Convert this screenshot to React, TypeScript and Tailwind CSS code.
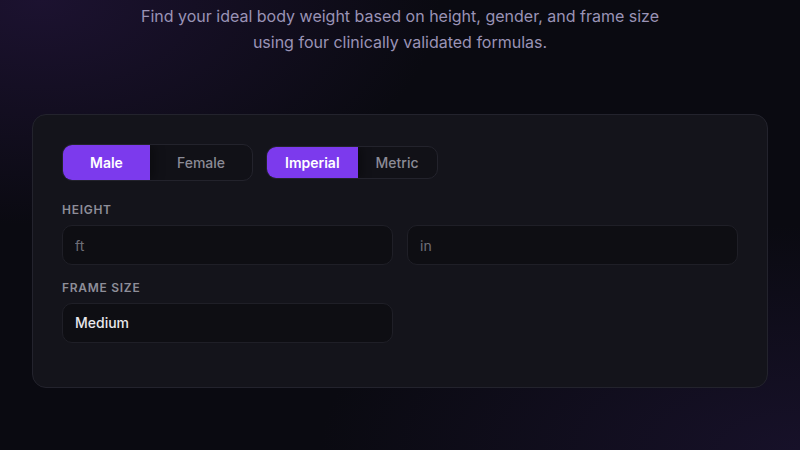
import { useState } from "react";

const font = { fontFamily: "Inter, 'Noto Sans', sans-serif" };

function Segmented({
  options,
  value,
  onChange,
  size,
}: {
  options: string[];
  value: string;
  onChange: (v: string) => void;
  size: "lg" | "sm";
}) {
  const btn = size === "lg" ? "h-[35px] px-[27px]" : "h-[31px] px-[18px]";
  return (
    <div className="flex rounded-[10px] border border-[#23232c] bg-[#111117] overflow-hidden">
      {options.map((opt) => (
        <button
          key={opt}
          onClick={() => onChange(opt)}
          className={
            opt === value
              ? `${btn} bg-[#7c3aed] text-white text-sm font-semibold shadow-[4px_0_10px_rgba(0,0,0,0.35)]`
              : `${btn} text-[#8b8b96] text-sm font-medium`
          }
        >
          {opt}
        </button>
      ))}
    </div>
  );
}

export default function App() {
  const [gender, setGender] = useState("Male");
  const [unit, setUnit] = useState("Imperial");

  return (
    <div
      style={font}
      className="min-h-[450px] bg-[#0a0a11] bg-[image:radial-gradient(ellipse_50%_50%_at_5%_0%,#1c1230_0%,transparent_100%),radial-gradient(ellipse_60%_50%_at_100%_100%,#171129_0%,transparent_100%)] px-8 pt-[3px]"
    >
      <p className="mx-auto max-w-[540px] text-center text-base leading-[26px] text-[#9a93b6]">
        Find your ideal body weight based on height, gender, and frame size
        using four clinically validated formulas.
      </p>

      <div className="mt-[59px] rounded-[14px] border border-[#23232d] bg-[#14141b] px-[29px] pt-[29px] pb-[44px]">
        {/* Toggles */}
        <div className="flex items-center gap-[13px]">
          <Segmented options={["Male", "Female"]} value={gender} onChange={setGender} size="lg" />
          <Segmented options={["Imperial", "Metric"]} value={unit} onChange={setUnit} size="sm" />
        </div>

        {/* Height */}
        <label className="mt-[21px] block text-xs font-semibold uppercase tracking-[0.06em] text-[#8e8e99]">
          Height
        </label>
        <div className="mt-[7px] grid grid-cols-2 gap-[14px]">
          <input
            placeholder="ft"
            className="h-[40px] rounded-[10px] border border-[#1f1f27] bg-[#0e0e13] px-3 text-sm text-[#e5e5ea] placeholder:text-[#6e6e78] outline-none"
          />
          <input
            placeholder="in"
            className="h-[40px] rounded-[10px] border border-[#1f1f27] bg-[#0e0e13] px-3 text-sm text-[#e5e5ea] placeholder:text-[#6e6e78] outline-none"
          />
        </div>

        {/* Frame size */}
        <label className="mt-[15px] block text-xs font-semibold uppercase tracking-[0.06em] text-[#8e8e99]">
          Frame Size
        </label>
        <div className="mt-[7px] grid grid-cols-2 gap-[14px]">
          <div className="flex h-[40px] items-center rounded-[10px] border border-[#1f1f27] bg-[#0e0e13] px-3 text-sm font-medium text-[#e8e8ec]">
            Medium
          </div>
        </div>
      </div>
    </div>
  );
}
